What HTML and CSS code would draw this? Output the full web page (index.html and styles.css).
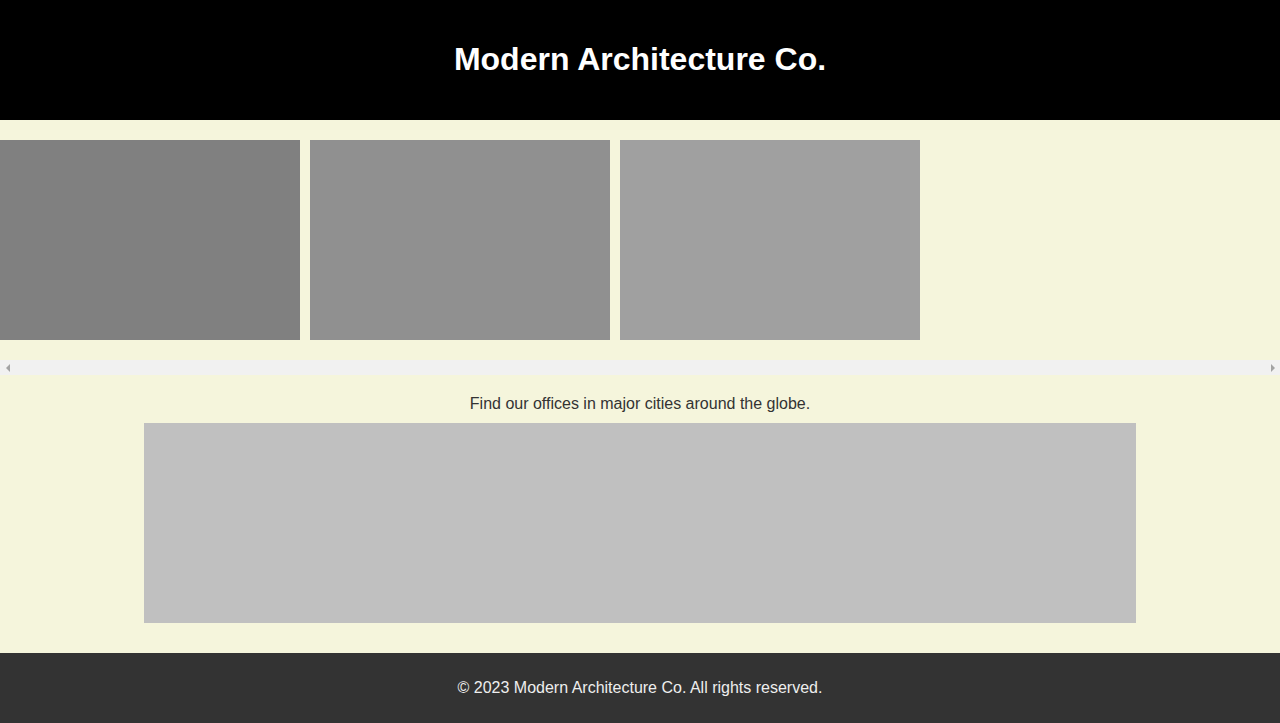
FILE: index.html
```html
<!DOCTYPE html>
<html lang="en">
<head>
<meta charset="utf-8">
<title>Modern Architecture Co.</title>
<link rel="stylesheet" href="styles.css">
</head>
<body>
<header class="site-header">
  <h1 class="site-title">Modern Architecture Co.</h1>
</header>
<section class="gallery">
  <div class="gallery-track">
    <div class="shot shot-1"></div>
    <div class="shot shot-2"></div>
    <div class="shot shot-3"></div>
  </div>
  <div class="scrollbar" aria-hidden="true">
    <span class="scroll-btn"><span class="arrow arrow-left"></span></span>
    <span class="scroll-btn"><span class="arrow arrow-right"></span></span>
  </div>
</section>
<section class="offices">
  <p class="offices-text">Find our offices in major cities around the globe.</p>
  <div class="map"></div>
</section>
<footer class="site-footer">
  <p class="footer-text">© 2023 Modern Architecture Co. All rights reserved.</p>
</footer>
</body>
</html>
```

FILE: styles.css
```css
* { box-sizing: border-box; }
html, body {
  margin: 0;
  padding: 0;
}
body {
  background: #f5f5dc;
  font-family: "Liberation Sans", Arial, sans-serif;
  color: #333;
}
.site-header {
  background: #000;
  color: #fff;
  text-align: center;
  padding: 40px 0 42px;
}
.site-title {
  margin: 0;
  font-size: 32px;
  line-height: 38px;
  font-weight: bold;
}
.gallery-track {
  display: flex;
  gap: 10px;
  padding: 20px 0;
  overflow: hidden;
}
.shot {
  flex: 0 0 300px;
  width: 300px;
  height: 200px;
}
.shot-1 { background: #808080; }
.shot-2 { background: #909090; }
.shot-3 { background: #a0a0a0; }
.scrollbar {
  display: flex;
  justify-content: space-between;
  height: 15px;
  background: #f1f1f1;
}
.scroll-btn {
  width: 15px;
  height: 15px;
  display: flex;
  align-items: center;
  justify-content: center;
}
.arrow {
  width: 0;
  height: 0;
  border-top: 4px solid transparent;
  border-bottom: 4px solid transparent;
}
.arrow-left { border-right: 4px solid #a3a3a3; }
.arrow-right { border-left: 4px solid #a3a3a3; }
.offices {
  padding: 20px 20px 30px;
  text-align: center;
}
.offices-text {
  margin: 0 0 10px;
  font-size: 16px;
  line-height: 18px;
}
.map {
  width: 80%;
  height: 200px;
  margin: 0 auto;
  background: #c0c0c0;
}
.site-footer {
  background: #333;
  color: #eee;
  text-align: center;
  padding: 26px 0;
}
.footer-text {
  margin: 0;
  font-size: 16px;
  line-height: 18px;
}
```
